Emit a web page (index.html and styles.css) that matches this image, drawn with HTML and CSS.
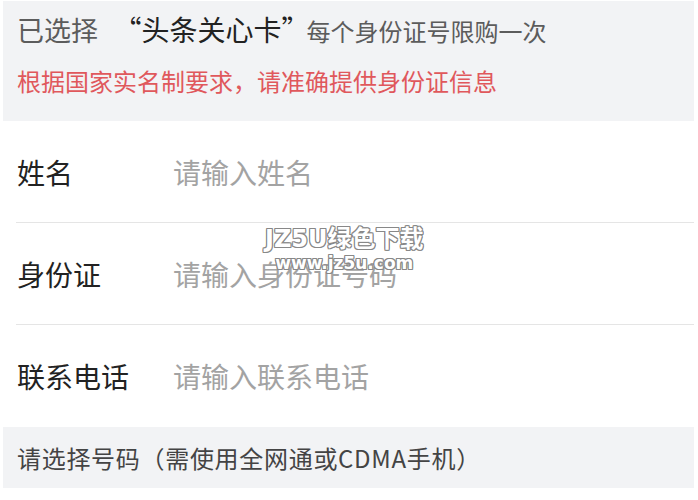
FILE: index.html
```html
<!DOCTYPE html>
<html lang="zh-CN">
<head>
  <meta charset="UTF-8">
  <title>头条关心卡</title>
  <link rel="stylesheet" href="styles.css">
</head>
<body>

  <div class="page">
    <div class="notice">
      <p class="notice-title">
        <span class="selected">已选择</span>
        <span class="card-name">“头条关心卡”</span><span class="limit">每个身份证号限购一次</span>
      </p>
      <p class="notice-warn">根据国家实名制要求，请准确提供身份证信息</p>
    </div>

    <form class="fields">
      <label class="field">
        <span class="field-label">姓名</span>
        <input class="field-input" type="text" placeholder="请输入姓名">
      </label>
      <label class="field">
        <span class="field-label">身份证</span>
        <input class="field-input" type="text" placeholder="请输入身份证号码">
      </label>
      <label class="field">
        <span class="field-label">联系电话</span>
        <input class="field-input" type="tel" placeholder="请输入联系电话">
      </label>
    </form>

    <div class="section-bar">请选择号码（需使用全网通或CDMA手机）</div>

    <!-- watermark over the form -->
    <div class="watermark">
      <div class="wm-big">JZ5U绿色下载</div>
      <div class="wm-small">www.jz5u.com</div>
    </div>
  </div>

</body>
</html>
```

FILE: styles.css
```css
body {
  margin: 0;
  padding: 0;
  background-color: #fff;
  font-family: 'Noto Sans CJK SC', 'Noto Sans', sans-serif;
  text-spacing-trim: space-all;
}

.page {
  position: relative;
  margin: 1px 4px 0 3px;
}

.notice {
  background-color: #f2f3f5;
  height: 120px;
  padding: 0 0 0 14px;
  box-sizing: border-box;
}

.notice p {
  margin: 0;
  white-space: nowrap;
}

.notice-title {
  padding-top: 10px;
  height: 36px;
  line-height: 36px;
  color: #5c5c5c;
}

.selected {
  font-size: 27px;
}

.card-name {
  margin-left: 12px;
  margin-right: -3px;
  font-size: 28px;
  color: #222;
}

.limit {
  font-size: 24px;
}

.notice-warn {
  margin-top: 16px !important;
  font-size: 24px;
  line-height: 36px;
  color: #e0585c;
}

.fields {
  margin: 0;
}

.field {
  display: flex;
  align-items: center;
  height: 101px;
  margin-left: 13px;
  border-bottom: 1px solid #e5e5e5;
}

.field:last-child {
  border-bottom: none;
  height: 102px;
}

.field-label {
  width: 156px;
  padding-left: 1px;
  font-size: 28px;
  color: #222;
}

.field-input {
  flex: 1;
  border: none;
  outline: none;
  padding: 0;
  background: transparent;
  font-family: 'Noto Sans CJK SC', 'Noto Sans', sans-serif;
  font-size: 28px;
  color: #333;
}

.field-input::placeholder {
  color: #a3a3a3;
}

.section-bar {
  background-color: #f2f3f5;
  height: 61px;
  line-height: 61px;
  padding-left: 14px;
  font-size: 24px;
  letter-spacing: 0.7px;
  color: #444;
}

.watermark {
  position: absolute;
  left: 262px;
  top: 224px;
  text-align: center;
  font-family: 'DejaVu Sans', 'Noto Sans CJK SC', sans-serif;
  font-weight: bold;
  color: #fff;
  text-shadow: 1px 0 #888, -1px 0 #888, 0 1px #888, 0 -1px #888,
    1px 1px #888, -1px -1px #888, 1px -1px #888, -1px 1px #888;
}

.wm-big {
  font-size: 24px;
  line-height: 28px;
}

.wm-small {
  font-size: 17px;
  line-height: 20px;
}
```
